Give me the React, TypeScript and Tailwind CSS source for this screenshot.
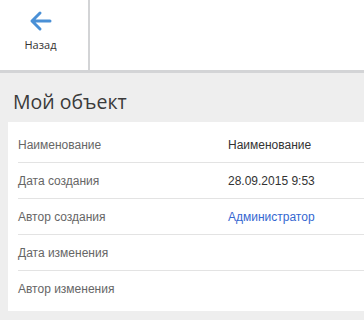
import React from 'react'

const rows: { label: string; value?: string; link?: boolean }[] = [
  { label: 'Наименование', value: 'Наименование' },
  { label: 'Дата создания', value: '28.09.2015 9:53' },
  { label: 'Автор создания', value: 'Администратор', link: true },
  { label: 'Дата изменения' },
  { label: 'Автор изменения' },
]

export default function App() {
  return (
    <div className="w-[364px] h-[320px] bg-[#eeeeee] overflow-hidden">
      <div className="h-[73px] bg-white border-b-[3px] border-[#d3d4d6] flex">
        <button className="w-[90px] h-full border-r-2 border-[#d3d4d6] pr-[7px] flex flex-col items-center pt-[10px]">
          <svg width="24" height="22" viewBox="0 0 24 22" fill="none">
            <path
              d="M21 11H4M11 3L3 11l8 8"
              stroke="#4a90d6"
              strokeWidth="3"
              strokeLinecap="round"
              strokeLinejoin="round"
            />
          </svg>
          <span className="mt-[5px] text-[11px] text-[#333] font-['Open_Sans',sans-serif]">
            Назад
          </span>
        </button>
      </div>

      <h1 className="px-[13px] pt-[14px] h-[49px] text-[19.5px] text-[#3a3a3a] font-['Open_Sans',sans-serif]">
        Мой объект
      </h1>

      <div className="ml-[8px] bg-white pt-[5px] pb-[4px] font-['Liberation_Sans',Arial,sans-serif] text-[12px]">
        {rows.map((r, i) => (
          <div
            key={r.label}
            className={
              'ml-[10px] h-[36px] flex items-center ' +
              (i < rows.length - 1 ? 'border-b border-[#e3e3e3]' : '')
            }
          >
            <span className="w-[210px] text-[#666]">{r.label}</span>
            {r.value && (
              <span className={r.link ? 'text-[#3567d1]' : 'text-[#333]'}>
                {r.value}
              </span>
            )}
          </div>
        ))}
      </div>
    </div>
  )
}
